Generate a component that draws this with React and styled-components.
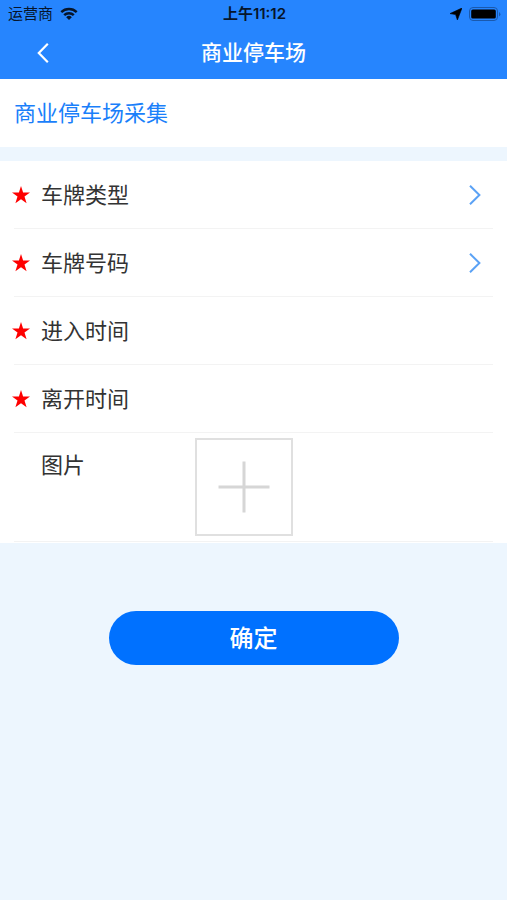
import React from 'react';
import styled, {createGlobalStyle} from 'styled-components';

const pickers = [
  {id: 'plate-type', label: '车牌类型'},
  {id: 'plate-number', label: '车牌号码'}
];

const times = [
  {id: 'enter-time', label: '进入时间'},
  {id: 'leave-time', label: '离开时间'}
];

const Star = () =>
  <StarIcon viewBox="0 0 18 18" aria-hidden="true">
    <path d="M9 0L11.1 6.5H18L12.5 10.6L14.6 17.2L9 13.2L3.4 17.2L5.5 10.6L0 6.5H6.9Z" fill="#fe0000" />
  </StarIcon>;

export default class App extends React.Component {
  render() {
    return (
      <React.Fragment>
        <GlobalStyle />

        <Header>
          <StatusBar>
            <Carrier>
              运营商
              <svg width="18" height="14" viewBox="0 0 18 14">
                <g fill="none" stroke="#06152b" strokeWidth="2.4">
                  <path d="M1.3 5.1A11 11 0 0 1 16.7 5.1" />
                  <path d="M4.2 8.2A6.8 6.8 0 0 1 13.8 8.2" />
                </g>
                <path d="M9 13L6.2 10.2A4 4 0 0 1 11.8 10.2Z" fill="#06152b" />
              </svg>
            </Carrier>
            <Clock>上午11:12</Clock>
            <Indicators>
              <svg width="12" height="12" viewBox="0 0 12 12">
                <path d="M12 0L7.4 12L5.6 6.6L0 5.6Z" fill="#000" stroke="#000" strokeWidth="0.6" strokeLinejoin="round" />
              </svg>
              <svg width="32" height="14" viewBox="0 0 32 14">
                <rect x="0.5" y="0.5" width="28" height="13" rx="3.5" fill="none" stroke="#1a59ad" />
                <rect x="2.2" y="2.4" width="24.6" height="9.2" rx="1.6" fill="#000" />
                <path d="M30 5V9.4Q31.4 8.6 31.4 7.2T30 5Z" fill="#1a59ad" />
              </svg>
            </Indicators>
          </StatusBar>

          <NavBar>
            <Back type="button" aria-label="返回">
              <svg width="12" height="20" viewBox="0 0 12 20">
                <path d="M10.8 0.8L1.8 10L10.8 19.2" fill="none" stroke="#fff" strokeWidth="2.2" />
              </svg>
            </Back>
            <Title>商业停车场</Title>
          </NavBar>
        </Header>

        <Section>商业停车场采集</Section>

        <Form>
          {pickers.map((item) =>
            <React.Fragment key={item.id}>
              <PickerRow type="button">
                <Star />
                <Label as="span">{item.label}</Label>
                <Chevron viewBox="0 0 12 20" aria-hidden="true">
                  <path d="M1 0.8L10.4 10L1 19.2" fill="none" stroke="#5ba2f5" strokeWidth="2" />
                </Chevron>
              </PickerRow>
              <Divider />
            </React.Fragment>
          )}

          {times.map((item) =>
            <React.Fragment key={item.id}>
              <Row>
                <Star />
                <Label htmlFor={item.id}>{item.label}</Label>
                <Input id={item.id} type="text" />
              </Row>
              <Divider />
            </React.Fragment>
          )}

          <PhotoRow>
            <PhotoLabel id="photo-label">图片</PhotoLabel>
            <Upload type="button" aria-labelledby="photo-label">
              <svg width="52" height="52" viewBox="0 0 52 52">
                <path d="M26 0.5V51.5M0.5 26H51.5" fill="none" stroke="#d6d6d6" strokeWidth="3" />
              </svg>
            </Upload>
          </PhotoRow>
          <Divider />
        </Form>

        <Submit type="button">确定</Submit>
      </React.Fragment>
    );
  }
}

const GlobalStyle = createGlobalStyle`
  * {
    box-sizing: border-box;
  }

  body {
    margin: 0;
    background: #edf6fe;
    color: #333;
    font-family: Inter, "Noto Sans CJK SC", sans-serif;
  }

  svg {
    display: block;
    flex: none;
  }

  button {
    padding: 0;
    border: 0;
    background: none;
    color: inherit;
    font-family: inherit;
    cursor: pointer;
  }
`;

const Header = styled.header`
  background: #2685fe;
`;

const StatusBar = styled.div`
  display: grid;
  grid-template-columns: 1fr auto 1fr;
  align-items: center;
  height: 27px;
  padding: 0 6px 0 8px;
  color: #06152b;
  font-size: 15px;
  line-height: 20px;
`;

const Carrier = styled.div`
  display: flex;
  align-items: center;
  gap: 7px;
`;

const Clock = styled.div`
  font-weight: 600;
`;

const Indicators = styled.div`
  display: flex;
  align-items: center;
  justify-content: flex-end;
  gap: 7px;
`;

const NavBar = styled.div`
  display: grid;
  grid-template-columns: 1fr auto 1fr;
  align-items: center;
  height: 52px;
`;

const Back = styled.button`
  justify-self: start;
  padding: 10px 37px;
`;

const Title = styled.h1`
  margin: 0;
  color: #fff;
  font-size: 21px;
  font-weight: 500;
  line-height: 32px;
`;

const Section = styled.h2`
  margin: 0 0 14px;
  padding: 18px 14px;
  background: #fff;
  color: #1a7ffa;
  font-size: 22px;
  font-weight: 400;
  line-height: 32px;
`;

const Form = styled.div`
  padding-bottom: 1px;
  background: #fff;
`;

const Row = styled.div`
  display: flex;
  align-items: center;
  width: 100%;
  height: 67px;
  padding: 0 26px 0 12px;
`;

const PickerRow = styled(Row).attrs({as: 'button'})`
  text-align: left;
`;

const Divider = styled.hr`
  height: 1px;
  margin: 0 14px;
  border: 0;
  background: #f3f3f3;
`;

const StarIcon = styled.svg`
  width: 18px;
  height: 18px;
  margin-right: 11px;
`;

const Label = styled.label`
  flex: none;
  font-size: 22px;
  line-height: 32px;
`;

const Input = styled.input`
  flex: 1;
  min-width: 0;
  height: 40px;
  margin-left: 16px;
  border: 0;
  outline: 0;
  background: none;
  font: inherit;
  font-size: 22px;
`;

const Chevron = styled.svg`
  width: 12px;
  height: 20px;
  margin-left: auto;
`;

const PhotoRow = styled.div`
  display: grid;
  grid-template-columns: 1fr auto 1fr;
  align-items: start;
  padding: 5px 20px 5px 0;
`;

const PhotoLabel = styled(Label).attrs({as: 'span'})`
  margin-top: 11px;
  padding-left: 41px;
`;

const Upload = styled.button`
  display: flex;
  align-items: center;
  justify-content: center;
  width: 98px;
  height: 98px;
  border: 2px solid #e0e0e0;
`;

const Submit = styled.button`
  display: block;
  width: 290px;
  max-width: 90%;
  height: 54px;
  margin: 68px auto 32px;
  padding-bottom: 4px;
  border-radius: 27px;
  background: #0071ff;
  color: #fff;
  font-size: 24px;
  font-weight: 500;
`;
